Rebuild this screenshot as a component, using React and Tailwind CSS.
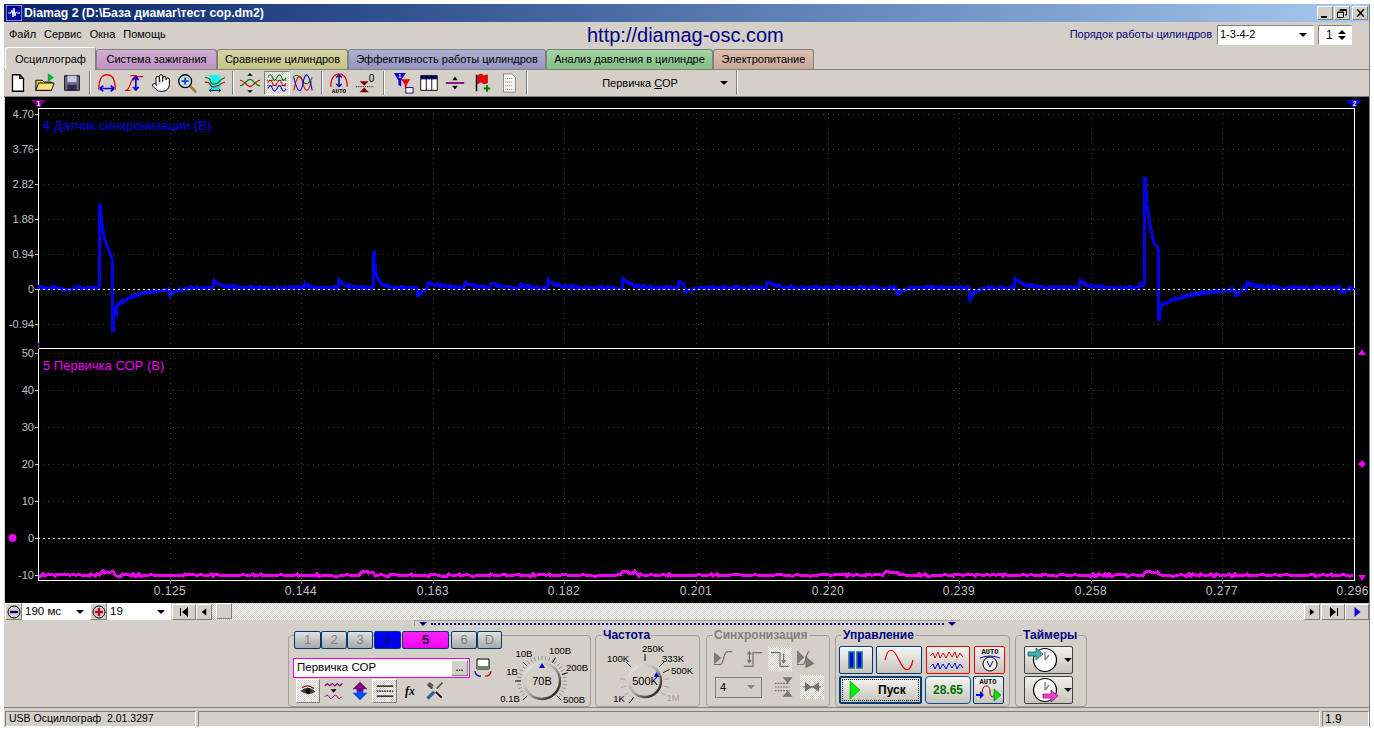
import React from 'react';
import { Hand } from 'lucide-react';

const raised = 'border border-t-white border-l-white border-r-[#808080] border-b-[#808080]';
const sunken = 'border border-t-[#808080] border-l-[#808080] border-r-white border-b-white';
const checker = 'bg-[repeating-conic-gradient(#d4d0c8_0%_25%,#ffffff_0%_50%)] bg-[length:2px_2px]';

// pseudo random, stable between renders
const rnd = (i) => {
  const s = Math.sin(i * 12.9898) * 43758.5453;
  return s - Math.floor(s);
};

const bumps = [
  [214, 7, 8], [305, 3, 5], [339, 7, 7], [374, 22, 1.2], [374, 15, 6], [428, 6, 12], [465, 5, 8], [491, 5, 8],
  [520, 3, 6], [548, 7, 10], [623, 9, 8], [679, 7, 7], [767, 6, 10], [1015, 9, 10], [1080, 7, 8], [1247, 5, 10],
  [62, -2, 8], [170, -6, 6], [418, -9, 5], [685, -7, 6], [897, -7, 5], [970, -12, 5], [1236, -7, 4], [1342, -5, 5],
  [1140, 4, 5],
];

const lerp = (tbl, x) => {
  for (let i = 1; i < tbl.length; i++) {
    if (x <= tbl[i][0]) {
      const [a, b] = [tbl[i - 1], tbl[i]];
      return a[1] + ((b[1] - a[1]) * (x - a[0])) / (b[0] - a[0]);
    }
  }
  return tbl[tbl.length - 1][1];
};

const spike1 = [[100, 204], [102, 225], [105, 240], [108, 248], [112, 258]];
const spike2 = [[1145, 177], [1147, 205], [1150, 225], [1154, 243], [1158, 248]];

const blueY = (x) => {
  if (x >= 100 && x <= 112) return lerp(spike1, x);
  if (x >= 1145 && x <= 1158) return lerp(spike2, x);
  if (x === 113) return 332;
  if (x === 114) return 318;
  if (x === 115) return 307;
  if (x === 116) return 317;
  if (x === 1159) return 321;
  if (x === 1160) return 310;
  let y = 288 + (rnd(x) > 0.6 ? -1 : 0);
  if (x > 116 && x < 190) y += 18 * Math.exp(-(x - 117) / 22);
  if (x > 1160 && x < 1240) y += 17 * Math.exp(-(x - 1161) / 35);
  for (const [x0, h, t] of bumps) {
    if (x >= x0) y -= h * Math.exp(-(x - x0) / t);
  }
  return Math.round(y);
};

const bluePts = [];
for (let x = 38; x <= 1354; x++) bluePts.push(`${x},${blueY(x)}`);

const pinkPts = [];
for (let x = 39; x <= 1353; x += 2) {
  const raisedPart = [100, 361, 622, 884, 1145].some((s) => x >= s && x <= s + 13);
  pinkPts.push(`${x},${(raisedPart ? 572 : 575) + Math.round(rnd(x) * 2 - 1)}`);
}

const hGrid = [114, 149, 184, 219, 254, 324, 353, 390, 427, 464, 501, 575];
const vGrid = [170, 301, 433, 564, 696, 828, 959, 1091, 1222];
const topAxis = [['4.70', 114], ['3.76', 149], ['2.82', 184], ['1.88', 219], ['0.94', 254], ['0', 289], ['-0.94', 324]];
const botAxis = [['50', 353], ['40', 390], ['30', 427], ['20', 464], ['10', 501], ['0', 538], ['-10', 575]];
const timeAxis = [['0.125', 170], ['0.144', 301], ['0.163', 433], ['0.182', 564], ['0.201', 696], ['0.220', 828], ['0.239', 959], ['0.258', 1091], ['0.277', 1222]];

const Scope = () => (
  <svg width="1364" height="506" viewBox="5 97 1364 506" className="block bg-black ml-[1px] flex-none" fontFamily="'Liberation Sans', sans-serif">
    {hGrid.map((y) => (
      <line key={y} x1="38" x2="1354" y1={y + 0.5} y2={y + 0.5} stroke="#3c3c10" strokeDasharray="1 4" />
    ))}
    {vGrid.map((x) => (
      <line key={x} x1={x + 0.5} x2={x + 0.5} y1="108" y2="580" stroke="#3c3c10" strokeDasharray="1 4" />
    ))}
    <line x1="38" x2="1354" y1="108.5" y2="108.5" stroke="#fff" />
    <line x1="38" x2="1354" y1="348.5" y2="348.5" stroke="#fff" />
    <line x1="38" x2="1354" y1="580.5" y2="580.5" stroke="#fff" />
    <line x1="38.5" x2="38.5" y1="108" y2="581" stroke="#fff" />
    <line x1="1354.5" x2="1354.5" y1="108" y2="581" stroke="#fff" />
    <line x1="38" x2="1354" y1="538.5" y2="538.5" stroke="#fff" strokeDasharray="2 3" />
    <polyline points={bluePts.join(' ')} fill="none" stroke="#0000f0" strokeWidth="3" shapeRendering="crispEdges" />
    <line x1="38" x2="1354" y1="289.5" y2="289.5" stroke="#fff" strokeDasharray="2 3" />
    <polyline points={pinkPts.join(' ')} fill="none" stroke="#f000f0" strokeWidth="3" shapeRendering="crispEdges" />
    {topAxis.concat(botAxis).map(([t, y]) => (
      <g key={t + y}>
        <text x="34" y={y + 4} textAnchor="end" fontSize="11" fill="#c0c0c0">{t}</text>
        <line x1="35" x2="38" y1={y + 0.5} y2={y + 0.5} stroke="#c0c0c0" />
      </g>
    ))}
    {timeAxis.map(([t, x]) => (
      <g key={t}>
        <line x1={x + 0.5} x2={x + 0.5} y1="580" y2="584" stroke="#808080" />
        <text x={x} y="595" textAnchor="middle" fontSize="12" fill="#c0c0c0" letterSpacing="0.5">{t}</text>
      </g>
    ))}
    <text x="1369" y="595" textAnchor="end" fontSize="12" fill="#c0c0c0" letterSpacing="0.5">0.296</text>
    <text x="43" y="130" fontSize="13" fill="#0000f0">4 Датчик синхронизации (В)</text>
    <text x="43" y="370" fontSize="13" fill="#f000f0">5 Первичка СОР (В)</text>
    {/* cursors */}
    <path d="M31 100h15l-7 8z" fill="#800080" />
    <text x="38.5" y="106" textAnchor="middle" fontSize="7" fontWeight="bold" fill="#fff">1</text>
    <line x1="38.5" x2="38.5" y1="343" y2="349" stroke="#a000a0" />
    <path d="M1346 100h16l-8 8z" fill="#0000f0" />
    <text x="1354.5" y="106" textAnchor="middle" fontSize="7" fontWeight="bold" fill="#fff">2</text>
    <path d="M1358 355l4-6 4 6z" fill="#f000f0" />
    <path d="M1362 460l4 4-4 4-4-4z" fill="#f000f0" />
    <path d="M1358 575l4 6 4-6z" fill="#f000f0" />
    <circle cx="12.5" cy="538" r="4" fill="#f000f0" />
  </svg>
);

const Wave = ({ y, color, amp = 3 }) => (
  <path d={`M2 ${y}q3 ${-amp * 2} 5 0t5 0 5 0 5 0`} fill="none" stroke={color} strokeWidth="1.2" />
);

const icons = {
  file: (
    <path d="M6 3h8l4 4v14H6zM14 3v4h4" fill="#fff" stroke="#000" strokeWidth="1.4" />
  ),
  open: (
    <>
      <path d="M2 9h7l2 2h8v9H2z" fill="#e8c850" stroke="#000" />
      <path d="M2 20l3-8h17l-3 8z" fill="#f8e080" stroke="#000" />
      <path d="M15 1l7 5-7 5z" fill="#10b040" />
    </>
  ),
  save: (
    <>
      <path d="M4 4h16v16H4z" fill="#6a6a90" stroke="#000" />
      <path d="M7 4h10v7H7z" fill="#c8c8d8" />
      <path d="M7 14h10v6H7z" fill="#282848" />
    </>
  ),
  arcH: (
    <>
      <path d="M3 19C3 4 9 3 12 3s9 1 9 16" fill="none" stroke="#f00000" strokeWidth="1.4" />
      <path d="M4 18h16M4 18l4-3M4 18l4 3M20 18l-4-3M20 18l-4 3" fill="none" stroke="#0000e0" strokeWidth="1.8" />
    </>
  ),
  sCurve: (
    <>
      <path d="M3 20c6 0 4-15 12-15h7M2 20h6M8 4h7" fill="none" stroke="#f00000" strokeWidth="1.2" />
      <path d="M14 5v15M14 5l-3 4M14 5l3 4M14 20l-3-4M14 20l3-4" fill="none" stroke="#0000e0" strokeWidth="1.8" />
    </>
  ),
  zoom: (
    <>
      <path d="M15 15l7 7" stroke="#a08040" strokeWidth="3" />
      <circle cx="10" cy="10" r="7" fill="#c8e8f8" stroke="#000" strokeWidth="1.4" />
      <path d="M6 10h8M10 6v8" stroke="#2040c0" strokeWidth="2" />
    </>
  ),
  span: (
    <>
      <path d="M6 3h12v18H6z" fill="#20f0f0" />
      <path d="M1 6q5 0 6 4t5 3 5-3 6-4" fill="none" stroke="#008000" strokeWidth="1.2" />
      <path d="M1 11q5 0 6 3t5 2 5-2 6-3" fill="none" stroke="#c00000" strokeWidth="1.2" />
      <path d="M6 20h12M6 20l2-2M6 20l2 2M18 20l-2-2M18 20l-2 2" fill="none" stroke="#000" />
    </>
  ),
  cross: (
    <>
      <path d="M1 9c5 0 7 7 11 7s6-7 11-7" fill="none" stroke="#c00000" strokeWidth="1.2" />
      <path d="M1 15c5 0 7-7 11-7s6 7 11 7" fill="none" stroke="#008000" strokeWidth="1.2" />
      <path d="M9 4h6l-3-3zM9 20h6l-3 3z" fill="#000" />
    </>
  ),
  stack: (
    <>
      <Wave y={6} color="#008000" />
      <Wave y={12} color="#e00000" />
      <Wave y={18} color="#0000e0" />
      <path d="M1 9h22M1 15h22" stroke="#000" strokeDasharray="1 1" />
    </>
  ),
  overlay: (
    <>
      <path d="M1 6q5-6 10 3t11-3" fill="none" stroke="#008000" strokeWidth="1.2" />
      <path d="M2 20C6 0 10 2 12 12s6 12 9-2" fill="none" stroke="#e00000" strokeWidth="1.2" />
      <path d="M2 6c4 18 8 18 10 6s6-14 10 8" fill="none" stroke="#0000e0" strokeWidth="1.2" />
    </>
  ),
  autoV: (
    <>
      <path d="M3 16C3 4 9 2 12 2s9 2 9 14" fill="none" stroke="#e00000" strokeWidth="1.4" />
      <path d="M12 3v13M12 3l-3 3M12 3l3 3M12 16l-3-3M12 16l3-3" fill="none" stroke="#0000a0" strokeWidth="1.6" />
      <text x="12" y="23" textAnchor="middle" fontSize="6.5" fontWeight="bold" fill="#000" fontFamily="'Liberation Mono', monospace">AUTO</text>
    </>
  ),
  zero: (
    <>
      <path d="M5 10h10l-5 5zM5 22h10l-5-5z" fill="#800000" />
      <path d="M1 16h20" stroke="#000" strokeDasharray="1 1" />
      <text x="18" y="11" textAnchor="middle" fontSize="11" fill="#000" fontFamily="'Liberation Sans', sans-serif">0</text>
    </>
  ),
  filter: (
    <>
      <path d="M2 1h13L10 9v7L7 14V9z" fill="#0000e0" />
      <text x="8.5" y="7" textAnchor="middle" fontSize="6" fontWeight="bold" fill="#fff">1</text>
      <path d="M10 8h10l-4 6v6l-2-2v-4z" fill="#f00000" />
      <path d="M15 17h8v6h-8z" fill="#fff" stroke="#000080" />
    </>
  ),
  table: (
    <>
      <path d="M3 4h18v16H3z" fill="#fff" stroke="#000" />
      <path d="M3 4h18v4H3z" fill="#000060" />
      <path d="M9 4v16M15 4v16" stroke="#000" />
    </>
  ),
  split: (
    <>
      <path d="M2 12h20" stroke="#800080" strokeWidth="2" />
      <path d="M9 9h6l-3-4zM9 15h6l-3 4z" fill="#000" />
    </>
  ),
  flag: (
    <>
      <path d="M6 3v18" stroke="#000" strokeWidth="1.6" />
      <path d="M7 4l4-2 3 2 4-1v9l-4 1-3-2-4 2z" fill="#f00000" stroke="#600000" strokeWidth=".5" />
      <path d="M14 18h7M17.500 14.500v7" stroke="#008000" strokeWidth="2.2" />
    </>
  ),
  note: (
    <>
      <path d="M6 2h9l4 4v16H6z" fill="#f4f4f0" stroke="#808080" />
      <path d="M8 7h7M8 11h7M8 15h7M8 19h7" stroke="#707070" strokeDasharray="1 1" />
    </>
  ),
};

const ToolIcon = ({ name, active, className = '' }) => (
  <div className={`w-[26px] h-[24px] flex-none flex items-center justify-center ${active ? `${sunken} ${checker}` : ''} ${className}`}>
    {name === 'hand' ? (
      <Hand size={20} fill="#fff" stroke="#000" strokeWidth={1.2} />
    ) : (
      <svg width="22" height="22" viewBox="0 0 24 24">{icons[name]}</svg>
    )}
  </div>
);

const Sep = ({ className = '' }) => <div className={`w-[2px] h-[24px] flex-none border-l border-l-[#808080] border-r border-r-white ${className}`} />;

const Arrow = ({ className = '', color = 'border-t-black' }) => (
  <span className={`inline-block w-0 h-0 border-x-[4px] border-x-transparent border-t-[4px] ${color} ${className}`} />
);

const Toolbar = () => (
  <div className="h-[27px] flex-none flex items-center pl-[1px] border-b border-b-[#808080]">
    <ToolIcon name="file" />
    <ToolIcon name="open" className="ml-[1px]" />
    <ToolIcon name="save" className="ml-[1px]" />
    <Sep className="ml-[4px]" />
    <ToolIcon name="arcH" className="ml-[3px]" />
    <ToolIcon name="sCurve" className="ml-[1px]" />
    <ToolIcon name="hand" className="ml-[1px]" />
    <ToolIcon name="zoom" />
    <ToolIcon name="span" className="ml-[2px]" />
    <Sep className="ml-[4px]" />
    <ToolIcon name="cross" className="ml-[3px]" />
    <ToolIcon name="stack" active className="ml-[1px]" />
    <ToolIcon name="overlay" />
    <Sep className="ml-[5px]" />
    <ToolIcon name="autoV" className="ml-[3px]" />
    <ToolIcon name="zero" className="ml-[1px]" />
    <Sep className="ml-[4px]" />
    <ToolIcon name="filter" className="ml-[5px]" />
    <ToolIcon name="table" />
    <ToolIcon name="split" />
    <ToolIcon name="flag" className="ml-[1px]" />
    <ToolIcon name="note" className="ml-[1px]" />
    <Sep className="ml-[4px]" />
    <div className="w-[208px] h-[16px] flex-none flex items-center justify-center pl-[16px] relative">
      <span>Первичка <span className="underline">С</span>ОР</span>
      <Arrow className="absolute right-[8px] top-[6px]" />
    </div>
    <Sep />
  </div>
);

const tabs = [
  ['Система зажигания', 'w-[121px] from-[#d0b0d4] to-[#c090c0]'],
  ['Сравнение цилиндров', 'w-[131px] from-[#d4d4a4] to-[#c4c488]'],
  ['Эффективность работы цилиндров', 'w-[198px] from-[#b0b0d0] to-[#9494c0]'],
  ['Анализ давления в цилиндре', 'w-[167px] from-[#a4d4a4] to-[#84c084]'],
  ['Электропитание', 'w-[101px] from-[#dcc0b0] to-[#c8a898]'],
];

const TabsRow = () => (
  <div className="h-[23px] flex-none flex items-end pl-[1px] border-b border-b-[#808080]">
    <div className="w-[91px] h-[23px] -mb-[1px] bg-[#d4d0c8] border border-b-0 border-[#808080] border-t-white border-l-white rounded-t-[3px] text-center pt-[3px] z-10 flex-none">
      Осциллограф
    </div>
    {tabs.map(([name, c]) => (
      <div key={name} className={`${c} h-[20px] flex-none bg-gradient-to-b border border-b-0 border-[#808080] rounded-t-[3px] text-center leading-[19px]`}>
        {name}
      </div>
    ))}
  </div>
);

const SmallBtn = ({ className = '', children }) => (
  <div className={`flex-none h-[16px] bg-[#d4d0c8] ${raised} flex items-center justify-center ${className}`}>{children}</div>
);

const Tri = ({ dir = 'r', color = '#000', w = 8, h = 10 }) => (
  <svg width={w} height={h} viewBox="0 0 8 10">
    <path d={dir === 'r' ? 'M1 0l6 5-6 5z' : 'M7 0L1 5l6 5z'} fill={color} />
  </svg>
);

const RoundBtn = ({ plus }) => (
  <div className={`w-[17px] h-[17px] flex-none flex items-center justify-center bg-[#d4d0c8] ${raised}`}>
    <svg width="14" height="14" viewBox="0 0 14 14">
      <circle cx="7" cy="7" r="6" fill="#d4d0c8" stroke="#000" />
      {plus ? <path d="M3 7h8M7 3v8" stroke="#c00020" strokeWidth="2.4" /> : <path d="M3 7h8" stroke="#000080" strokeWidth="2.4" />}
    </svg>
  </div>
);

const ScrollRow = () => (
  <div className="h-[17px] flex-none flex items-center pl-[1px] text-[11.5px]">
    <RoundBtn />
    <div className="w-[68px] h-[17px] bg-white flex-none flex items-center justify-between pl-[3px] pr-[6px]">
      190 мс
      <Arrow />
    </div>
    <RoundBtn plus />
    <div className="w-[64px] h-[17px] bg-white flex-none flex items-center justify-between pl-[3px] pr-[6px]">
      19
      <Arrow />
    </div>
    <SmallBtn className="w-[24px] ml-[1px]">
      <span className="flex items-center"><span className="w-[1px] h-[8px] bg-black" /><Tri dir="l" /></span>
    </SmallBtn>
    <SmallBtn className="w-[16px]"><Tri dir="l" w={6} /></SmallBtn>
    <div className={`w-[91px] flex-1 h-[17px] ${checker} flex`}>
      <SmallBtn className="w-[16px] ml-[4px]" />
    </div>
    <SmallBtn className="w-[16px]"><Tri w={6} /></SmallBtn>
    <SmallBtn className="w-[24px] ml-[1px]">
      <span className="flex items-center"><Tri /><span className="w-[1px] h-[8px] bg-black" /></span>
    </SmallBtn>
    <SmallBtn className="w-[24px] border-l-[#000080]"><Tri color="#0000f0" w={9} /></SmallBtn>
  </div>
);

const GroupBox = ({ title, titleColor = 'text-[#000080]', className = '', children }) => (
  <div className={`relative h-[72px] flex-none border border-[#a0a0a0] rounded-[4px] ${className}`}>
    {title && (
      <span className={`absolute -top-[8px] left-[6px] px-[1px] bg-[#d4d0c8] font-bold text-[12px] leading-[14px] ${titleColor}`}>
        {title}
      </span>
    )}
    {children}
  </div>
);

const polar = (cx, cy, r, deg) => {
  const a = ((deg - 90) * Math.PI) / 180;
  return [cx + r * Math.cos(a), cy + r * Math.sin(a)];
};

const Dial = ({ width, cx, cy, r, value, labels, ticks, majors, markerDeg, inner, outer, tickColor }) => (
  <svg width={width} height="66" viewBox={`0 0 ${width} 66`} className="block flex-none mt-[4px]" fontFamily="'Liberation Sans', sans-serif">
    <defs>
      <linearGradient id={`knob${width}`} x1="0" y1="0" x2="1" y2="1">
        <stop offset="0" stopColor="#f4f4f4" />
        <stop offset="0.5" stopColor="#a8a8a8" />
        <stop offset="1" stopColor="#000" />
      </linearGradient>
    </defs>
    {ticks.map((d) => {
      const [x1, y1] = polar(cx, cy, inner, d);
      const [x2, y2] = polar(cx, cy, outer, d);
      return <line key={d} x1={x1} y1={y1} x2={x2} y2={y2} stroke={tickColor} strokeWidth="1" />;
    })}
    {majors.map((d) => {
      const [x1, y1] = polar(cx, cy, inner, d);
      const [x2, y2] = polar(cx, cy, outer + 2, d);
      return <line key={d} x1={x1} y1={y1} x2={x2} y2={y2} stroke="#000" strokeWidth="1" />;
    })}
    <circle cx={cx} cy={cy} r={r} fill="#d4d0c8" stroke={`url(#knob${width})`} strokeWidth="2.5" />
    <path
      d={(() => {
        const [x, y] = polar(cx, cy, r - 3, markerDeg);
        return `M${x - 3} ${y + 2}h6l-3-5z`;
      })()}
      fill="#0000e0"
    />
    <text x={cx} y={cy + 4} textAnchor="middle" fontSize="11" fill="#000">{value}</text>
    {labels.map(([t, x, y, c]) => (
      <text key={t} x={x} y={y} textAnchor="middle" fontSize="9.5" fill={c || '#000'}>{t}</text>
    ))}
  </svg>
);

const voltTicks = [];
for (let d = -135; d <= 135; d += 9) voltTicks.push(d);

const chanTabs = [
  ['1', 'w-[27px] text-[#808080] from-[#e0e0e0] to-[#a8a8a8]'],
  ['2', 'w-[26px] text-[#808080] from-[#e0e0e0] to-[#a8a8a8]'],
  ['3', 'w-[26px] text-[#808080] from-[#e0e0e0] to-[#a8a8a8]'],
  ['4', 'w-[27px] ml-[1px] text-[#000060] from-[#0000ff] to-[#0000e0]'],
  ['5', 'w-[47px] ml-[1px] text-[#200020] font-bold from-[#ff20ff] to-[#f000f0]'],
  ['6', 'w-[26px] ml-[2px] text-[#808080] from-[#e0e0e0] to-[#a8a8a8]'],
  ['D', 'w-[25px] text-[#808080] from-[#e0e0e0] to-[#a8a8a8]'],
];

const SmallIcon = ({ active, w = 'w-[24px]', children }) => (
  <div className={`${w} h-[24px] flex-none flex items-center justify-center ${active ? `${raised} ${checker}` : ''}`}>
    <svg width="20" height="20" viewBox="0 0 24 24">{children}</svg>
  </div>
);

const ChannelGroup = () => (
  <GroupBox className="w-[303px] flex">
    <div className="w-[206px] flex-none pl-[5px]">
      <div className="flex -mt-[5px] h-[18px] text-[13px]">
        {chanTabs.map(([t, c]) => (
          <div key={t} className={`${c} h-[18px] flex-none bg-gradient-to-b border border-[#003c74] rounded-[2px] flex items-center justify-center`}>
            {t}
          </div>
        ))}
      </div>
      <div className="flex items-center mt-[9px] -ml-[1px]">
        <div className="w-[177px] h-[20px] flex-none bg-white border border-[#f000f0] flex items-center justify-between pl-[3px] pr-[1px] text-[11.5px]">
          Первичка СОР
          <div className={`w-[17px] h-[16px] bg-[#d4d0c8] ${raised} flex items-center justify-center text-[9px] font-bold leading-none`}>...</div>
        </div>
        <svg width="18" height="20" viewBox="0 0 18 20" className="ml-[4px] flex-none">
          <path d="M3 1h12v10H3z" fill="#fff" stroke="#000" />
          <path d="M3 8h12v3H3z" fill="#688868" />
          <path d="M1 13a5 5 0 0 0 6 5" fill="none" stroke="#0000c0" strokeWidth="1.4" />
          <path d="M17 13a5 5 0 0 1-6 5" fill="none" stroke="#e00000" strokeWidth="1.4" />
        </svg>
      </div>
      <div className="flex mt-[1px] ml-[2px] items-center">
        <SmallIcon active>
          <path d="M3 12q9-8 18 1-9 6-18-1z" fill="#404040" />
          <circle cx="12" cy="12" r="3" fill="#000" />
          <path d="M5 8q7-5 14 1" fill="none" stroke="#802020" strokeWidth="1.5" />
        </SmallIcon>
        <SmallIcon w="w-[28px]">
          <path d="M1 6l3-3 3 3 3-3 3 3 3-3 3 3 3-3" fill="none" stroke="#800080" strokeWidth="1.4" />
          <path d="M8 10h7l-3.5 4z" fill="#000" />
          <path d="M1 19q3-4 5 0t5 0 5 0 5 0" fill="none" stroke="#800080" strokeWidth="1.2" />
        </SmallIcon>
        <SmallIcon>
          <path d="M12 1l9 9h-5v2H8v-2H3z" fill="#800080" />
          <path d="M12 23l9-9h-5v-2H8v2H3z" fill="#0050f0" />
        </SmallIcon>
        <SmallIcon active w="w-[25px]">
          <path d="M2 6h20M2 18h20" stroke="#000" strokeWidth="1.5" />
          <path d="M2 12h20" stroke="#000" strokeWidth="1.5" strokeDasharray="2 1" />
        </SmallIcon>
        <div className="w-[26px] text-center font-['Liberation_Serif',serif] italic font-bold text-[12px] leading-none">
          fx
        </div>
        <SmallIcon>
          <path d="M3 21l8-8" stroke="#3060a0" strokeWidth="4" />
          <path d="M9 9L4 3M5 2l4 3-2 3-4-4" fill="none" stroke="#505050" strokeWidth="2" />
          <path d="M13 13l7 7" stroke="#000" strokeWidth="2" />
          <path d="M14 9l7-7" stroke="#505050" strokeWidth="2" />
        </SmallIcon>
      </div>
    </div>
    <Dial
      width={95}
      cx={47}
      cy={41}
      r={18}
      inner={21}
      outer={25}
      tickColor="#909090"
      value="70В"
      markerDeg={0}
      ticks={voltTicks}
      majors={[-135, -90, -45, 30, 72, 135]}
      labels={[['0.1В', 15, 62], ['1В', 17, 35], ['10В', 29, 17], ['100В', 65, 14], ['200В', 82, 31], ['500В', 79, 63]]}
    />
  </GroupBox>
);

const FreqGroup = () => (
  <GroupBox title="Частота" className="w-[105px] ml-[4px]">
    <Dial
      width={103}
      cx={49}
      cy={41}
      r={16}
      inner={20}
      outer={25}
      tickColor="#a0a0a0"
      value="500K"
      markerDeg={62}
      ticks={[-125, -105, -85, 85, 105, 125]}
      majors={[-145, -45, 0, 45, 65]}
      labels={[['250K', 57, 12], ['100K', 22, 22], ['333K', 77, 22], ['500K', 86, 34], ['1K', 23, 62], ['1M', 77, 61, '#a0a0a0']]}
    />
  </GroupBox>
);

const GreyIcon = ({ active, children, className = '' }) => (
  <div className={`w-[24px] h-[24px] flex-none flex items-center justify-center ${active ? checker : ''} ${className}`}>
    <svg width="22" height="22" viewBox="0 0 24 24" fill="none" stroke="#707070" strokeWidth="1.3">{children}</svg>
  </div>
);

const SyncGroup = () => (
  <GroupBox title="Синхронизация" titleColor="text-[#808080]" className="w-[124px] ml-[6px]">
    <div className="flex items-center pl-[4px] mt-[11px]">
      <GreyIcon>
        <path d="M2 18h7c4 0 3-14 8-14h5" />
        <path d="M3 6l6 5-6 5z" fill="#808080" />
      </GreyIcon>
      <GreyIcon className="ml-[6px]">
        <path d="M2 20h10V5h10" />
        <path d="M8 4v12M6 7l2-3 2 3M6 13l2 3 2-3" />
      </GreyIcon>
      <GreyIcon active className="ml-[3px]">
        <path d="M2 5h10v15h10" />
        <path d="M16 6v10M14 13l2 3 2-3" />
      </GreyIcon>
      <GreyIcon className="ml-[2px]">
        <path d="M2 18h6c5 0 3-14 8-14" />
        <path d="M3 4l6 6-6 6zM12 10l8 7-8 4z" fill="#808080" />
      </GreyIcon>
    </div>
    <div className="flex items-center pl-[8px] mt-[4px]">
      <div className="w-[47px] h-[21px] flex-none border border-[#808080] flex items-center justify-between pl-[4px] pr-[6px]">
        4
        <Arrow color="border-t-[#808080]" />
      </div>
      <GreyIcon className="ml-[10px]">
        <path d="M2 8h16M2 12h16M2 16h16" strokeDasharray="2 1" />
        <path d="M12 2h8l-4 5zM12 22h8l-4-5z" fill="#808080" />
      </GreyIcon>
      <GreyIcon active className="ml-[4px]">
        <path d="M2 12h20" />
        <path d="M5 8l6 4-6 4zM19 8l-6 4 6 4z" fill="#707070" />
      </GreyIcon>
    </div>
  </GroupBox>
);

const CtlBtn = ({ className = '', children }) => (
  <div className={`flex-none rounded-[2px] bg-gradient-to-b from-[#f4f4f0] to-[#c8c4bc] flex items-center justify-center ${className}`}>{children}</div>
);

const blueBorder = 'border border-[#003c74]';

const ControlGroup = () => (
  <GroupBox title="Управление" className="w-[175px] ml-[5px]">
    <div className="pl-[3px] pt-[10px]">
      <div className="flex">
        <CtlBtn className={`${blueBorder} w-[34px] h-[28px]`}>
          <svg width="18" height="20" viewBox="0 0 18 20">
            <path d="M2 2h5v16H2zM10 2h5v16h-5z" fill="#0000e0" stroke="#008080" strokeWidth="1.5" />
          </svg>
        </CtlBtn>
        <CtlBtn className={`${blueBorder} w-[46px] h-[28px] ml-[3px]`}>
          <svg width="30" height="22" viewBox="0 0 30 22">
            <path d="M1 11C4 -2 9 -2 15 11s11 13 14 0" fill="none" stroke="#e00000" strokeWidth="1.2" />
          </svg>
        </CtlBtn>
        <CtlBtn className="border border-[#f00000] w-[44px] h-[28px] ml-[4px]">
          <svg width="38" height="24" viewBox="0 0 38 24" fill="none" strokeWidth="1">
            <path d="M1 8l3-3 2 5 3-6 2 6 3-5 3 5 3-6 3 5 3-5 2 6 3-5 3 4" stroke="#e00000" />
            <path d="M1 19l3-3 2 5 3-6 2 6 3-5 3 5 3-6 3 5 3-5 2 6 3-5 3 4" stroke="#0000e0" />
          </svg>
        </CtlBtn>
        <CtlBtn className="border border-[#f00000] w-[31px] h-[28px] ml-[4px]">
          <svg width="26" height="26" viewBox="0 0 26 26">
            <text x="13" y="7" textAnchor="middle" fontSize="7" fontWeight="bold" fontFamily="'Liberation Mono', monospace">AUTO</text>
            <path d="M3 11q10-4 20 0" fill="none" stroke="#0000e0" />
            <circle cx="13" cy="17" r="7" fill="#f0f0e8" stroke="#000" />
            <path d="M10 14l3 6 3-6" fill="none" stroke="#000080" />
          </svg>
        </CtlBtn>
      </div>
      <div className="flex mt-[2px]">
        <CtlBtn className="w-[83px] h-[28px] border-2 border-[#003c74] justify-start relative">
          <svg width="12" height="18" viewBox="0 0 12 18" className="ml-[8px] flex-none">
            <path d="M1 0l10 9-10 9z" fill="#00f000" stroke="#008000" strokeWidth=".5" />
          </svg>
          <span className="ml-[17px] font-bold text-[12px]">Пуск</span>
          <span className="absolute inset-[1px] border border-dotted border-black" />
        </CtlBtn>
        <CtlBtn className="w-[46px] h-[28px] ml-[3px] border border-[#0050a0] rounded-[4px] font-bold text-[12px] text-[#007000]">
          28.65
        </CtlBtn>
        <CtlBtn className={`${blueBorder} w-[31px] h-[28px] ml-[2px]`}>
          <svg width="27" height="26" viewBox="0 0 27 26">
            <text x="13" y="7" textAnchor="middle" fontSize="7" fontWeight="bold" fontFamily="'Liberation Mono', monospace">AUTO</text>
            <path d="M7 18c0-9 3-9 5-9s3 3 3 6 2 8 5 2" fill="none" stroke="#800000" />
            <path d="M1 17h4v-3l4 4-4 4v-3H1z" fill="#0000e0" />
            <path d="M19 12l7 6-7 6z" fill="#00e000" stroke="#006000" strokeWidth=".5" />
          </svg>
        </CtlBtn>
      </div>
    </div>
  </GroupBox>
);

const Clock = ({ flip }) => (
  <svg width="38" height="26" viewBox="0 0 38 26">
    <circle cx="20" cy="13" r="11.500" fill="#fafafa" stroke="#000" strokeWidth="1.2" />
    <path d="M20 13V5M20 13l4-5" stroke="#808080" strokeWidth="1.3" fill="none" />
    {flip ? (
      <path d="M18 17h8v-4l7 6-7 6v-4h-8z" fill="#f040d0" stroke="#600060" strokeWidth=".6" />
    ) : (
      <path d="M3 5h8V1l7 6-7 6V9H3z" fill="#40b0b0" stroke="#004040" strokeWidth=".6" />
    )}
  </svg>
);

const TimersGroup = () => (
  <GroupBox title="Таймеры" className="w-[72px] ml-[5px]">
    <div className="pl-[8px] pt-[10px]">
      {[false, true].map((flip, i) => (
        <div key={i} className={`w-[49px] h-[28px] rounded-[2px] border border-[#404040] bg-gradient-to-b from-[#f0f0ec] to-[#c8c4bc] flex items-center ${i ? 'mt-[2px]' : ''}`}>
          <Clock flip={flip} />
          <Arrow className="ml-[1px]" />
        </div>
      ))}
    </div>
  </GroupBox>
);

const Tri2 = () => <span className="w-0 h-0 flex-none border-x-[4px] border-x-transparent border-t-[4px] border-t-[#000080]" />;

const ControlPanel = () => (
  <div className="h-[88px] flex-none border-b border-b-[#808080]">
    <div className="h-[6px] ml-[410px] w-[546px] border-t border-l border-[#a0a0a0] flex items-center gap-[4px] px-[4px]">
      <Tri2 />
      <div className="flex-1 h-0 border-t-2 border-dotted border-t-[#000080]" />
      <Tri2 />
    </div>
    <div className="flex mt-[9px] ml-[284px]">
      <ChannelGroup />
      <FreqGroup />
      <SyncGroup />
      <ControlGroup />
      <TimersGroup />
    </div>
  </div>
);

const WinBtn = ({ children, className = '' }) => (
  <div className={`w-[16px] h-[14px] bg-[#d4d0c8] ${raised} flex items-center justify-center ${className}`}>{children}</div>
);

export default function App() {
  return (
    <div className="w-[1374px] h-[732px] overflow-hidden bg-white p-[4px] font-['Liberation_Sans',sans-serif] text-[11px] text-black">
      <div className="h-[723px] flex flex-col bg-[#d4d0c8] border-r border-r-[#808080]">
        {/* title */}
        <div className="h-[18px] flex-none flex items-center bg-gradient-to-r from-[#0a246a] to-[#a6caf0] text-white font-bold text-[12.25px] pl-[2px] pr-[1px]">
          <svg width="16" height="16" viewBox="0 0 16 16" className="flex-none">
            <path d="M0 0h16v16H0z" fill="#0000a0" stroke="#fff" />
            <path d="M2 8h3l1-3 1 7 1-9 1 8 1-4 1 1h3" fill="none" stroke="#fff" />
          </svg>
          <span className="ml-[2px]">Diamag 2 (D:\База диамаг\тест сор.dm2)</span>
          <div className="ml-auto flex">
            <WinBtn>
              <span className="w-[6px] h-[2px] bg-black mt-[7px] -ml-[2px]" />
            </WinBtn>
            <WinBtn className="ml-[1px]">
              <svg width="10" height="9" viewBox="0 0 10 9" fill="none" stroke="#000">
                <path d="M3 2V.5h6.500V6H8M.5 3.500h6V8.500h-6zM3 1.500h6.500M.5 3h6" />
              </svg>
            </WinBtn>
            <WinBtn className="ml-[2px]">
              <svg width="9" height="8" viewBox="0 0 9 8" stroke="#000" strokeWidth="1.4">
                <path d="M1 0l7 8M8 0L1 8" />
              </svg>
            </WinBtn>
          </div>
        </div>
        {/* menu */}
        <div className="h-[25px] flex-none flex items-center pl-[5px]">
          <span>Файл</span>
          <span className="ml-[8px]">Сервис</span>
          <span className="ml-[8px]">Окна</span>
          <span className="ml-[8px]">Помощь</span>
          <span className="absolute left-[587px] text-[20px] text-[#000080]">http://diamag-osc.com</span>
          <span className="ml-auto text-[#000080]">Порядок работы цилиндров</span>
          <div className={`ml-[5px] w-[97px] h-[20px] bg-white ${sunken} flex items-center justify-between pl-[2px] pr-[6px]`}>
            1-3-4-2
            <Arrow />
          </div>
          <div className={`ml-[4px] mr-[17px] w-[34px] h-[20px] bg-white ${sunken} flex items-center justify-between pl-[7px] pr-[5px] text-[12px]`}>
            1
            <span className="flex flex-col gap-[2px]">
              <span className="w-0 h-0 border-x-[4px] border-x-transparent border-b-[4px] border-b-black" />
              <Arrow />
            </span>
          </div>
        </div>
        <TabsRow />
        <Toolbar />
        <Scope />
        <ScrollRow />
        <ControlPanel />
        {/* status */}
        <div className="h-[16px] flex-none mt-[3px] flex text-[10.5px]">
          <div className={`w-[191px] ml-[1px] ${sunken} flex items-center pl-[3px]`}>USB Осциллограф&nbsp; 2.01.3297</div>
          <div className={`flex-1 ml-[2px] ${sunken}`} />
          <div className={`w-[47px] ml-[2px] ${sunken} flex items-center pl-[2px] text-[12px]`}>1.9</div>
        </div>
      </div>
    </div>
  );
}
